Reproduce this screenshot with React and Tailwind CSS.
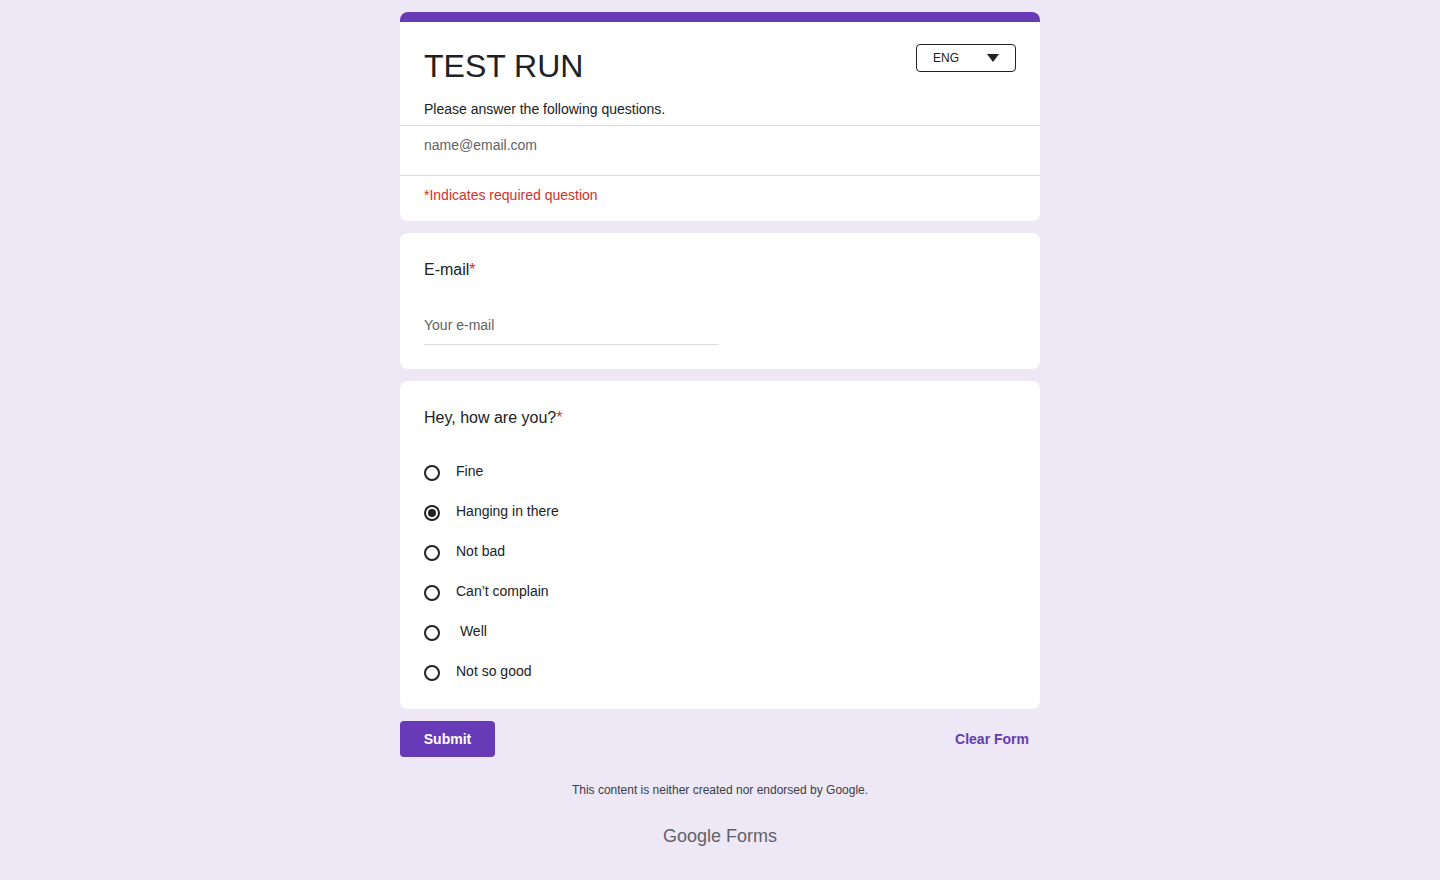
const options = ['Fine', 'Hanging in there', 'Not bad', 'Can’t complain', ' Well', 'Not so good'];

function Radio({ checked }) {
  return (
    <span className="flex h-4 w-4 shrink-0 items-center justify-center rounded-full border-2 border-[#202124]">
      {checked && <span className="h-2 w-2 rounded-full bg-[#202124]" />}
    </span>
  );
}

export default function App() {
  return (
    <div className="min-h-[880px] bg-[#ede7f6] pt-3 pb-8 font-['Liberation_Sans',Arial,sans-serif] text-[#202124]">
      <div className="mx-auto flex w-[640px] flex-col gap-3">
        {/* header card */}
        <div className="overflow-hidden rounded-lg bg-white">
          <div className="h-[10px] bg-[#673ab7]" />
          <div className="flex items-start justify-between px-6 pt-[22px]">
            <h1 className="text-[32px] leading-[44px]">TEST RUN</h1>
            <button className="flex h-[28px] w-[100px] items-center justify-between rounded border border-[#202124] pl-4 pr-4 text-xs">
              <span>ENG</span>
              <svg width="12" height="8" viewBox="0 0 12 8"><path d="M0 0h12L6 8z" fill="#202124" /></svg>
            </button>
          </div>
          <p className="px-6 pt-[11px] pb-[6px] text-sm leading-5">Please answer the following questions.</p>
          <div className="border-t border-[#dadce0] px-6 py-[9px] text-sm leading-5 text-[#5f6368]">name@email.com</div>
          <div className="mt-[11px] border-t border-[#dadce0] px-6 pt-[9px] pb-[16px] text-sm leading-5 text-[#d93025]">
            *Indicates required question
          </div>
        </div>

        {/* email card */}
        <div className="rounded-lg bg-white px-6 pt-[25px] pb-[24px]">
          <div className="text-base leading-6">
            E-mail<span className="text-[#d93025]">*</span>
          </div>
          <div className="mt-[33px] w-[295px] border-b border-[#dadce0] pb-[9px] text-sm leading-5 text-[#5f6368]">Your e-mail</div>
        </div>

        {/* question card */}
        <div className="rounded-lg bg-white px-6 pt-[25px] pb-[28px]">
          <div className="text-base leading-6">
            Hey, how are you?<span className="text-[#d93025]">*</span>
          </div>
          <div className="mt-[31px] flex flex-col gap-5">
            {options.map((o, i) => (
              <label key={i} className="flex h-5 items-center gap-4">
                <span className="mt-[3px]"><Radio checked={i === 1} /></span>
                <span className="whitespace-pre text-sm leading-5">{o}</span>
              </label>
            ))}
          </div>
        </div>

        {/* actions */}
        <div className="flex items-center justify-between">
          <button className="h-9 w-[95px] rounded bg-[#673ab7] text-sm font-bold text-white">Submit</button>
          <button className="pr-[11px] text-sm font-bold text-[#673ab7]">Clear Form</button>
        </div>

        <p className="mt-[13px] text-center text-xs text-[#3c4043]">This content is neither created nor endorsed by Google.</p>
        <div className="mt-[12px] text-center text-lg text-[#5f6368]">
          <span className="text-[#5f6368]">Google</span> Forms
        </div>
      </div>
    </div>
  );
}
